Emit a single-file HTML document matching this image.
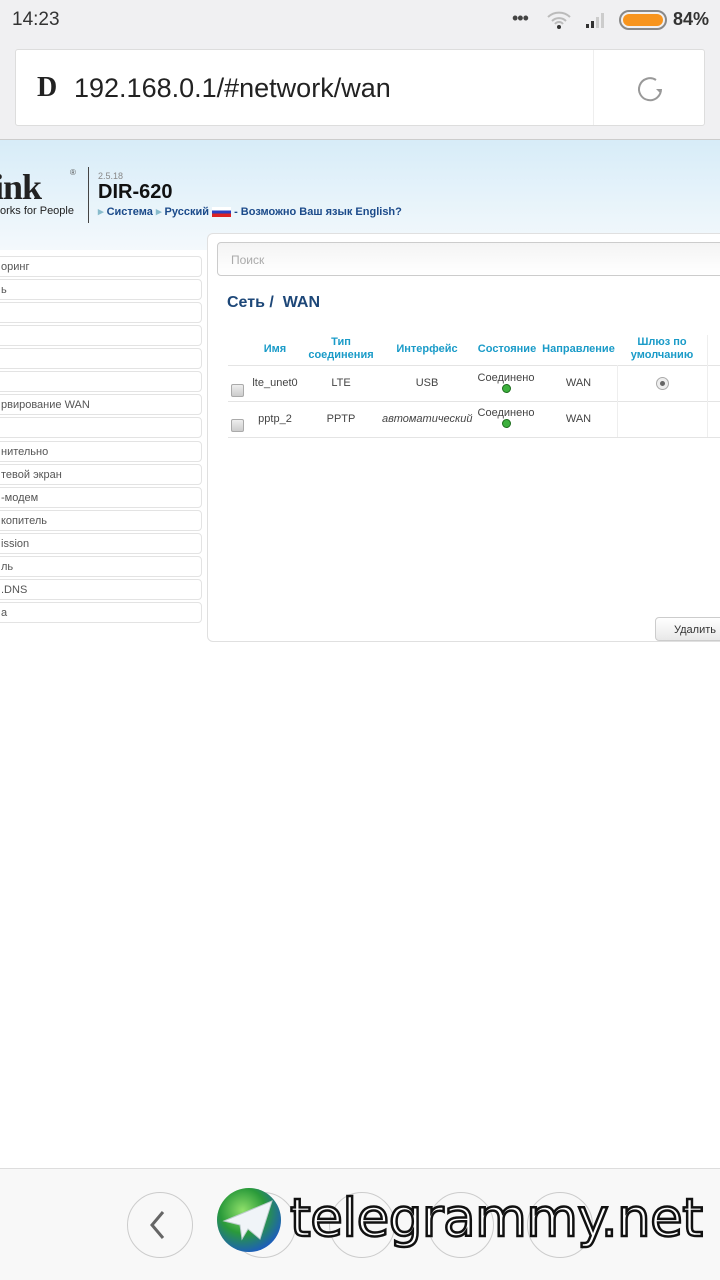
<!DOCTYPE html>
<html><head><meta charset="utf-8"><style>
*{margin:0;padding:0;box-sizing:border-box}
body{width:720px;height:1280px;overflow:hidden;background:#fff;font-family:"Liberation Sans","Noto Sans CJK SC",sans-serif;position:relative}
.abs{position:absolute}
.side{position:absolute;left:-10px;width:212px;height:21px;border:1px solid #e3e3e3;border-radius:4px;background:#fff;font-size:11px;color:#555;line-height:21px;padding-left:10px}
.c{position:absolute;font-size:11px;color:#444;text-align:center}
.dot{display:inline-block;width:9px;height:9px;border-radius:50%;background:#3db03d;border:1px solid #1d6e1d}
.cb{position:absolute;left:231px;width:13px;height:13px;border:1px solid #aaa;border-radius:2px;background:linear-gradient(#eee,#ccc)}
.circ{position:absolute;top:1192px;width:66px;height:66px;border:1px solid #ccc;border-radius:50%}
</style></head><body>
<div class="abs" style="left:0;top:0;width:720px;height:140px;background:#f0f0f2"></div>
<div class="abs" style="left:12px;top:9px;font-size:19px;color:#333">14:23</div>
<div class="abs" style="left:512px;top:8px;font-size:18px;color:#444;letter-spacing:-1px">•••</div>
<svg class="abs" style="left:546px;top:10px" width="26" height="20"><path d="M2 7a16 16 0 0 1 22 0M6 11a10 10 0 0 1 14 0M9 14a5 5 0 0 1 8 0" stroke="#bbb" stroke-width="2" fill="none"/><circle cx="13" cy="17" r="2" fill="#333"/></svg>
<svg class="abs" style="left:584px;top:11px" width="26" height="18"><rect x="2" y="13" width="3" height="4" fill="#333"/><rect x="7" y="10" width="3" height="7" fill="#333"/><rect x="12" y="6" width="3" height="11" fill="#ccc"/><rect x="17" y="2" width="3" height="15" fill="#ccc"/></svg>
<div class="abs" style="left:619px;top:10px;width:48px;height:20px;border:2px solid #888;border-radius:10px;padding:2px"><div style="width:100%;height:100%;background:#f7941d;border-radius:7px"></div></div>
<div class="abs" style="left:673px;top:9px;font-size:18px;color:#333;font-weight:bold">84%</div>
<div class="abs" style="left:15px;top:49px;width:690px;height:77px;background:#fff;border:1px solid #ddd;border-radius:3px"></div>
<div class="abs" style="left:593px;top:50px;width:1px;height:75px;background:#eee"></div>
<div class="abs" style="left:37px;top:72px;font-family:'Liberation Serif',serif;font-weight:bold;font-size:28px;color:#222">D</div>
<div class="abs" style="left:74px;top:73px;font-size:27px;color:#222">192.168.0.1/#network/wan</div>
<svg class="abs" style="left:636px;top:75px" width="28" height="28"><path d="M20 5A11 11 0 1 0 25 14" stroke="#999" stroke-width="2" fill="none"/><path d="M20 14l5 0 0 5z" fill="#999"/></svg>
<div class="abs" style="left:0;top:139px;width:720px;height:1px;background:#ccc"></div>
<div class="abs" style="left:0;top:140px;width:720px;height:110px;background:linear-gradient(#d7ecf8,#f4f9fc)"></div>
<div class="abs" style="left:-6px;top:166px;font-family:'Liberation Serif',serif;font-weight:bold;font-size:36px;color:#222;letter-spacing:-1px">ink</div>
<div class="abs" style="left:70px;top:168px;font-size:8px;color:#555">®</div>
<div class="abs" style="left:0;top:205px;font-size:11px;color:#222">orks for People</div>
<div class="abs" style="left:88px;top:167px;width:1px;height:56px;background:#444"></div>
<div class="abs" style="left:98px;top:171px;font-size:9px;color:#888">2.5.18</div>
<div class="abs" style="left:98px;top:181px;font-size:20px;font-weight:bold;color:#111">DIR-620</div>
<div class="abs" style="left:98px;top:205px;font-size:11px;color:#1b4a8a;font-weight:bold"><span style="color:#8bc">▸</span> Система <span style="color:#8bc">▸</span> Русский <span style="display:inline-block;width:19px;height:10px;vertical-align:middle;background:linear-gradient(#fff 0 33%,#2b3fc0 33% 66%,#d22 66%)"></span> - Возможно Ваш язык English?</div>
<div class="side" style="top:256px">оринг</div>
<div class="side" style="top:279px">ь</div>
<div class="side" style="top:302px"></div>
<div class="side" style="top:325px"></div>
<div class="side" style="top:348px"></div>
<div class="side" style="top:371px"></div>
<div class="side" style="top:394px">рвирование WAN</div>
<div class="side" style="top:417px"></div>
<div class="side" style="top:441px">нительно</div>
<div class="side" style="top:464px">тевой экран</div>
<div class="side" style="top:487px">-модем</div>
<div class="side" style="top:510px">копитель</div>
<div class="side" style="top:533px">ission</div>
<div class="side" style="top:556px">ль</div>
<div class="side" style="top:579px">.DNS</div>
<div class="side" style="top:602px">а</div>
<div class="abs" style="left:207px;top:233px;width:530px;height:409px;background:#fff;border:1px solid #e0e0e0;border-radius:6px"></div>
<div class="abs" style="left:217px;top:242px;width:520px;height:34px;border:1px solid #ccc;border-radius:4px;background:linear-gradient(#f4f4f4,#fff);font-size:12px;color:#aaa;padding:10px 13px">Поиск</div>
<div class="abs" style="left:227px;top:294px;font-size:16px;font-weight:bold;color:#1d4778">Сеть /&nbsp; WAN</div>
<div class="abs" style="left:228px;top:365px;width:492px;height:1px;background:#e4e4e4"></div>
<div class="abs" style="left:228px;top:401px;width:492px;height:1px;background:#e4e4e4"></div>
<div class="abs" style="left:228px;top:437px;width:492px;height:1px;background:#e4e4e4"></div>
<div class="abs" style="left:617px;top:365px;width:1px;height:72px;background:#eee"></div>
<div class="abs" style="left:707px;top:335px;width:1px;height:102px;background:#eee"></div>
<div class="c" style="left:250px;top:343px;width:50px;color:#1a9bc8;font-weight:bold">Имя</div>
<div class="c" style="left:300px;top:336px;width:82px;color:#1a9bc8;font-weight:bold;line-height:13px">Тип<br>соединения</div>
<div class="c" style="left:382px;top:343px;width:90px;color:#1a9bc8;font-weight:bold">Интерфейс</div>
<div class="c" style="left:472px;top:343px;width:70px;color:#1a9bc8;font-weight:bold">Состояние</div>
<div class="c" style="left:540px;top:343px;width:77px;color:#1a9bc8;font-weight:bold">Направление</div>
<div class="c" style="left:617px;top:336px;width:90px;color:#1a9bc8;font-weight:bold;line-height:13px">Шлюз по<br>умолчанию</div>
<div class="cb" style="top:384px"></div>
<div class="c" style="left:250px;top:377px;width:50px">lte_unet0</div>
<div class="c" style="left:300px;top:377px;width:82px">LTE</div>
<div class="c" style="left:382px;top:377px;width:90px">USB</div>
<div class="c" style="left:472px;top:372px;width:68px;line-height:12px">Соединено<br><span class="dot"></span></div>
<div class="c" style="left:540px;top:377px;width:77px">WAN</div>
<div class="abs" style="left:656px;top:377px;width:13px;height:13px;border:1px solid #aaa;border-radius:50%;background:#eee"><div style="margin:3px;width:5px;height:5px;border-radius:50%;background:#666"></div></div>
<div class="cb" style="top:419px"></div>
<div class="c" style="left:250px;top:413px;width:50px">pptp_2</div>
<div class="c" style="left:300px;top:413px;width:82px">PPTP</div>
<div class="c" style="left:382px;top:413px;width:90px;font-style:italic">автоматический</div>
<div class="c" style="left:472px;top:407px;width:68px;line-height:12px">Соединено<br><span class="dot"></span></div>
<div class="c" style="left:540px;top:413px;width:77px">WAN</div>
<div class="abs" style="left:655px;top:617px;width:80px;height:24px;border:1px solid #ccc;border-radius:4px;background:linear-gradient(#fff,#e8e8e8);font-size:11px;color:#333;padding:6px 18px">Удалить</div>
<div class="abs" style="left:0;top:1168px;width:720px;height:112px;background:#f8f8f8;border-top:1px solid #ddd"></div>
<div class="circ" style="left:127px"></div>
<div class="circ" style="left:230px"></div>
<div class="circ" style="left:329px"></div>
<div class="circ" style="left:428px"></div>
<div class="circ" style="left:527px"></div>
<svg class="abs" style="left:148px;top:1209px" width="20" height="32"><path d="M15 3L4 16l11 13" stroke="#666" stroke-width="3" fill="none"/></svg>
<div class="abs" style="left:217px;top:1188px;width:64px;height:64px;border-radius:50%;background:radial-gradient(circle at 40% 35%,#8fe06a,#2a9a3a 40%,#1d5fb8 75%)"></div>
<svg class="abs" style="left:220px;top:1195px" width="60" height="50"><path d="M4 26L52 6 40 44 28 34 22 44 20 30z" fill="#f0f4f8" stroke="#bcc" stroke-width="1"/></svg>
<div class="abs" style="left:290px;top:1188px;font-size:53px;color:#fff;font-family:'DejaVu Sans',sans-serif;-webkit-text-stroke:2.5px #111;letter-spacing:-0.5px">telegrammy.net</div>
</body></html>
